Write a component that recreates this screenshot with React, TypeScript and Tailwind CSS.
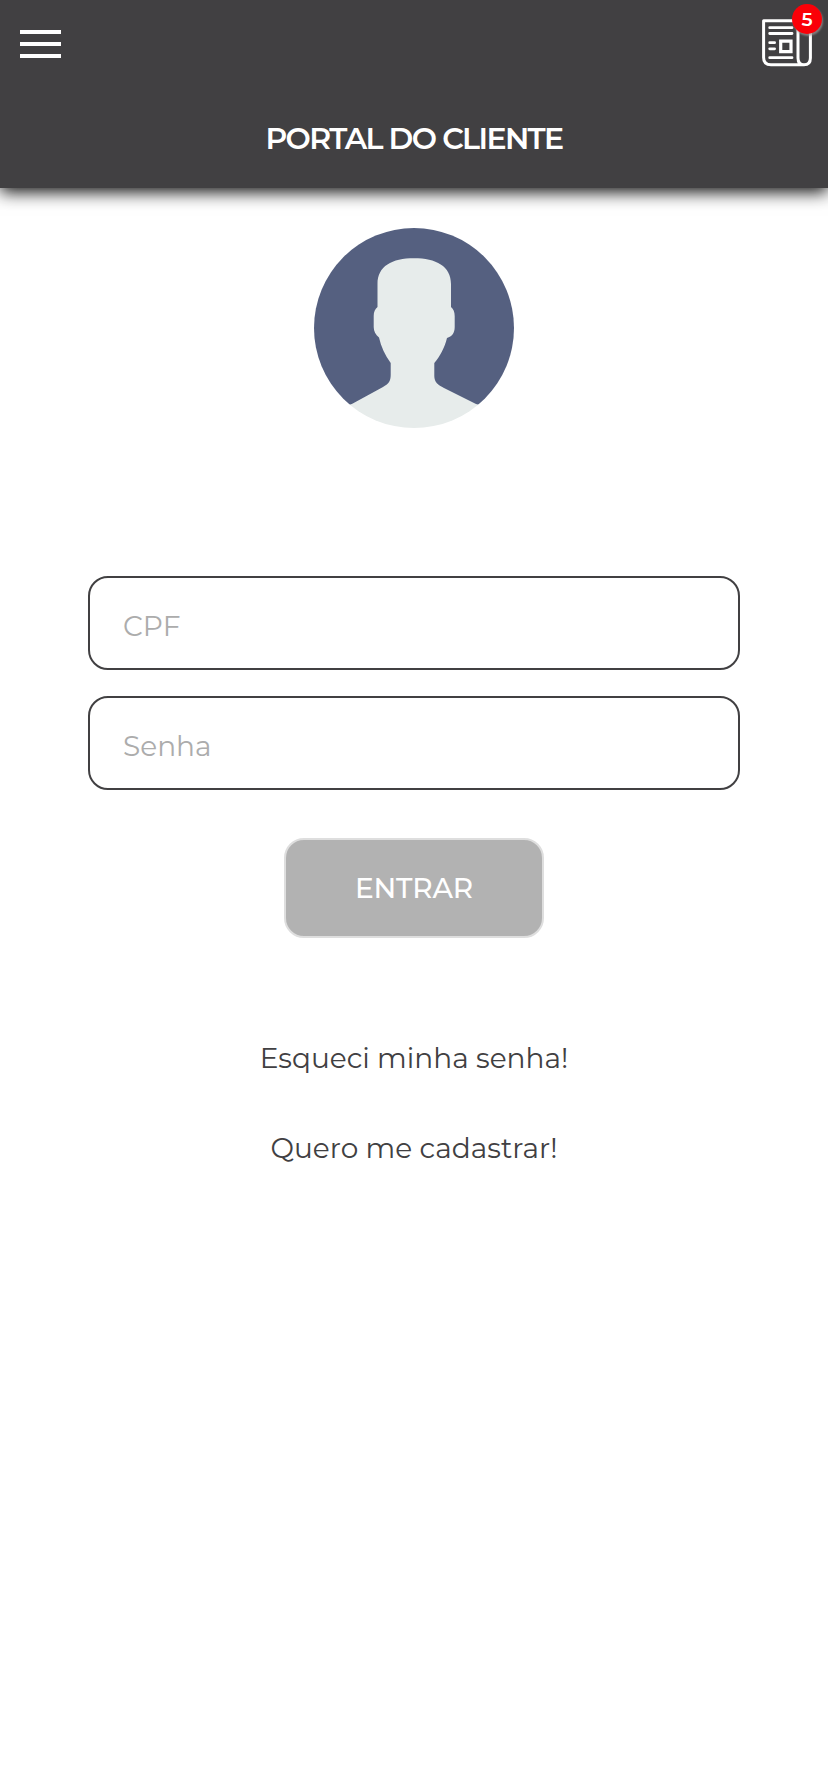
import React from 'react';

function MenuIcon() {
  return (
    <span className="flex w-[41px] flex-col gap-2">
      <span className="h-1 bg-white" />
      <span className="h-1 bg-white" />
      <span className="h-1 bg-white" />
    </span>
  );
}

function NewsIcon() {
  return (
    <svg viewBox="0 0 50 48" className="h-12 w-[50px]" fill="none" stroke="#fff" strokeWidth="3" strokeLinecap="round">
      <path d="M36 1.800H1.600V38.500Q1.600 45.800 9 45.800H42Q48.400 45.800 48.400 39V9H36M36 1.800V39Q36 45.800 42 45.800" strokeLinejoin="round" />
      <path d="M7.700 8.700H30M7.700 14.500H30M7.700 23.700H12.600M7.700 29.800H12.600M7.700 38.700H30" strokeWidth="2.800" />
      <path d="M18.700 22.200H29V32.600H18.700Z" strokeWidth="3.200" strokeLinecap="butt" />
    </svg>
  );
}

function Avatar() {
  return (
    <svg viewBox="0 0 200 200" className="h-[200px] w-[200px]">
      <defs>
        <clipPath id="avatar-circle"><circle cx="100" cy="100" r="100" /></clipPath>
      </defs>
      <g clipPath="url(#avatar-circle)">
        <rect y="176" width="200" height="24" fill="#e7eceb" />
        <rect width="200" height="176.500" fill="#556080" />
        <path
          fill="#e7eceb"
          d="M63.500 79V56C63.500 38 78 30.200 100 30.200S137 38 137 56V79C139.500 81 140.700 84 140.700 88V99C140.700 105 138 108.500 133 110C130.500 120 126 128.500 120.300 135V148C120.300 154 124 157 130 160L164 177H36L69 159C74.500 156 76.700 153 76.700 147V135C71 127 67 119 65 109.500C61.500 106.500 59.700 103 59.700 99V88C59.700 84 61 81 63.500 79Z"
        />
      </g>
    </svg>
  );
}

function Field({ label, type }: { label: string; type: string }) {
  return (
    <input
      type={type}
      placeholder={label}
      aria-label={label}
      className="h-[94px] w-full rounded-[20px] border-2 border-[#414042] bg-white px-[33px] pt-[6px] text-[28px] font-normal text-[#414042] outline-none placeholder:text-[#acacac]"
    />
  );
}

export default function App() {
  return (
    <div className="flex min-h-[1792px] w-full flex-col bg-white font-['Montserrat','Inter',sans-serif] text-[#414042]">
      <header className="h-[188px] bg-[#414042] shadow-[0_4px_16px_rgba(0,0,0,0.95)]">
        <div className="flex h-[88px] items-start justify-between pl-[19.500px] pr-4">
          <button aria-label="Menu" className="pt-[30px]"><MenuIcon /></button>
          <button aria-label="Notícias" className="relative pt-[19px]">
            <NewsIcon />
            <span className="absolute -right-[10px] top-1 flex h-[30px] w-[30px] items-center justify-center rounded-full bg-[#fa0008] pt-[2px] text-[19px] font-semibold text-white shadow-[1px_2px_2px_rgba(160,150,150,0.7)]">5</span>
          </button>
        </div>
        <h1 className="pt-[33px] text-center text-[30px] font-semibold leading-9 tracking-[-1.6px] text-white">PORTAL DO CLIENTE</h1>
      </header>
      <main className="flex flex-col items-center px-[88px] pt-10">
        <Avatar />
        <form className="mt-[148px] flex w-full flex-col items-center gap-[26px]" onSubmit={(e) => e.preventDefault()}>
          <Field label="CPF" type="text" />
          <Field label="Senha" type="password" />
          <button className="mt-[22px] h-[100px] w-[260px] rounded-[20px] border-2 border-[#dedede] bg-[#b2b2b2] text-[28px] font-medium tracking-[-0.2px] text-white">ENTRAR</button>
        </form>
        <a className="mt-[100px] text-[28px] font-normal leading-10">Esqueci minha senha!</a>
        <a className="mt-[50px] text-[28px] font-normal leading-10">Quero me cadastrar!</a>
      </main>
    </div>
  );
}
